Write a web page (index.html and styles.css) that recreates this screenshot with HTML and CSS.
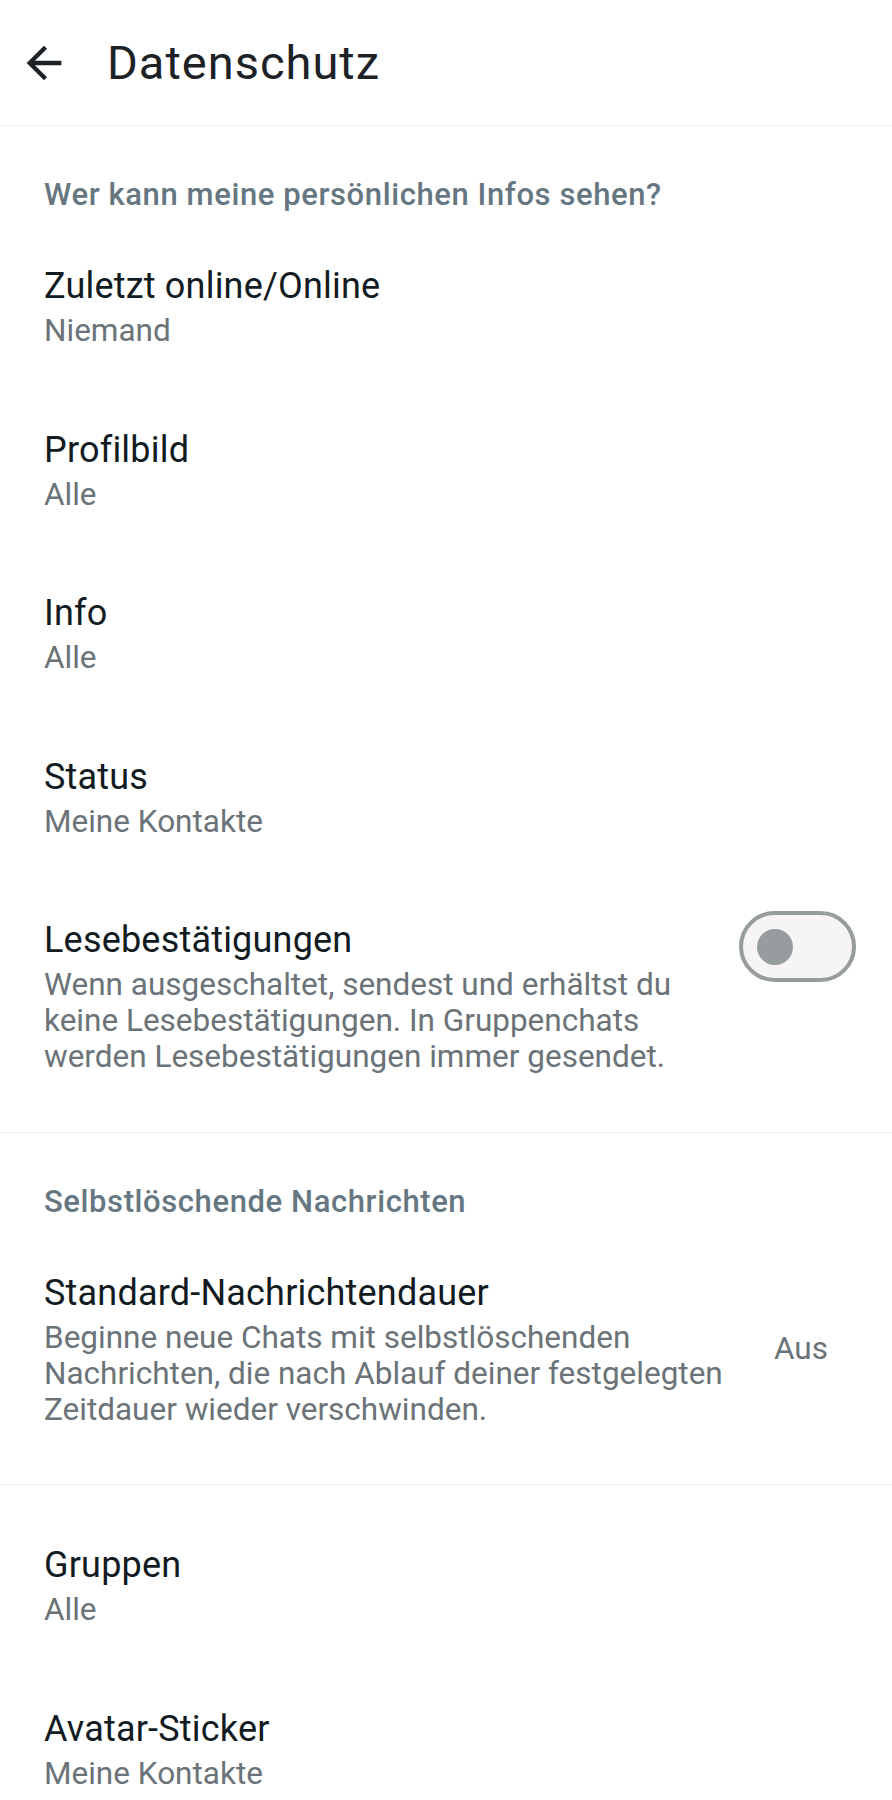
FILE: index.html
```html
<!DOCTYPE html>
<html lang="de">
<head>
  <meta charset="UTF-8">
  <title>Datenschutz</title>
  <link rel="stylesheet" href="styles.css">
</head>
<body>

  <header class="kopf">
    <svg class="zurueck" viewBox="0 0 24 24" width="52" height="52">
      <path d="M20 11H7.83l5.59-5.59L12 4l-8 8 8 8 1.41-1.41L7.83 13H20v-2z" fill="#1d2226"/>
    </svg>
    <h1>Datenschutz</h1>
  </header>

  <section class="gruppe">
    <h2>Wer kann meine persönlichen Infos sehen?</h2>

    <div class="eintrag">
      <div class="texte">
        <div class="titel">Zuletzt online/Online</div>
        <div class="wert">Niemand</div>
      </div>
    </div>

    <div class="eintrag">
      <div class="texte">
        <div class="titel">Profilbild</div>
        <div class="wert">Alle</div>
      </div>
    </div>

    <div class="eintrag">
      <div class="texte">
        <div class="titel">Info</div>
        <div class="wert">Alle</div>
      </div>
    </div>

    <div class="eintrag">
      <div class="texte">
        <div class="titel">Status</div>
        <div class="wert">Meine Kontakte</div>
      </div>
    </div>

    <div class="eintrag oben">
      <div class="texte">
        <div class="titel">Lesebestätigungen</div>
        <div class="wert">Wenn ausgeschaltet, sendest und erhältst du<br>keine Lesebestätigungen. In Gruppenchats<br>werden Lesebestätigungen immer gesendet.</div>
      </div>
      <div class="schalter"><span class="knopf"></span></div>
    </div>
  </section>

  <section class="gruppe zweite">
    <h2>Selbstlöschende Nachrichten</h2>

    <div class="eintrag">
      <div class="texte">
        <div class="titel">Standard-Nachrichtendauer</div>
        <div class="wert">Beginne neue Chats mit selbstlöschenden<br>Nachrichten, die nach Ablauf deiner festgelegten<br>Zeitdauer wieder verschwinden.</div>
      </div>
      <div class="rechts">Aus</div>
    </div>
  </section>

  <section class="gruppe ohne-rand">
    <div class="eintrag">
      <div class="texte">
        <div class="titel">Gruppen</div>
        <div class="wert">Alle</div>
      </div>
    </div>

    <div class="eintrag">
      <div class="texte">
        <div class="titel">Avatar-Sticker</div>
        <div class="wert">Meine Kontakte</div>
      </div>
    </div>
  </section>

</body>
</html>
```

FILE: styles.css
```css
body {
  margin: 0;
  font-family: Roboto, 'Noto Sans', sans-serif;
  background-color: #ffffff;
  color: #111b21;
}

.kopf {
  display: flex;
  align-items: center;
  height: 125px;
  border-bottom: 1px solid #eceeef;
}

.zurueck {
  margin-left: 18px;
  margin-right: 37px;
}

.kopf h1 {
  margin: 0;
  font-size: 47px;
  font-weight: 400;
  letter-spacing: 1px;
  color: #1d2226;
}

.gruppe {
  padding: 18px 0 18px;
  border-bottom: 1px solid #eceeef;
}

.gruppe.zweite h2 {
  padding-top: 33px;
}

.gruppe.ohne-rand {
  border-bottom: none;
  padding-top: 18px;
}

.gruppe h2 {
  margin: 0;
  padding: 33px 44px 11px;
  font-size: 31px;
  line-height: 36px;
  font-weight: 500;
  letter-spacing: 0.6px;
  color: #667781;
}

.eintrag {
  display: flex;
  align-items: center;
  padding: 39px 36px 38.5px 44px;
}

.eintrag.oben {
  align-items: flex-start;
}

.texte {
  flex: 1;
}

.titel {
  font-size: 36px;
  line-height: 46px;
  letter-spacing: 0.2px;
  color: #111b21;
}

.wert {
  margin-top: 4px;
  font-size: 31.5px;
  line-height: 36px;
  color: #6b7378;
}

.rechts {
  margin-right: 28px;
  font-size: 31.5px;
  color: #6b7378;
}

.schalter {
  box-sizing: border-box;
  width: 117px;
  height: 71px;
  margin-top: -6px;
  border: 4px solid #979c9e;
  border-radius: 36px;
  background-color: #f6f5f3;
  display: flex;
  align-items: center;
  padding-left: 14px;
}

.knopf {
  width: 36px;
  height: 36px;
  border-radius: 50%;
  background-color: #979c9e;
}
```
